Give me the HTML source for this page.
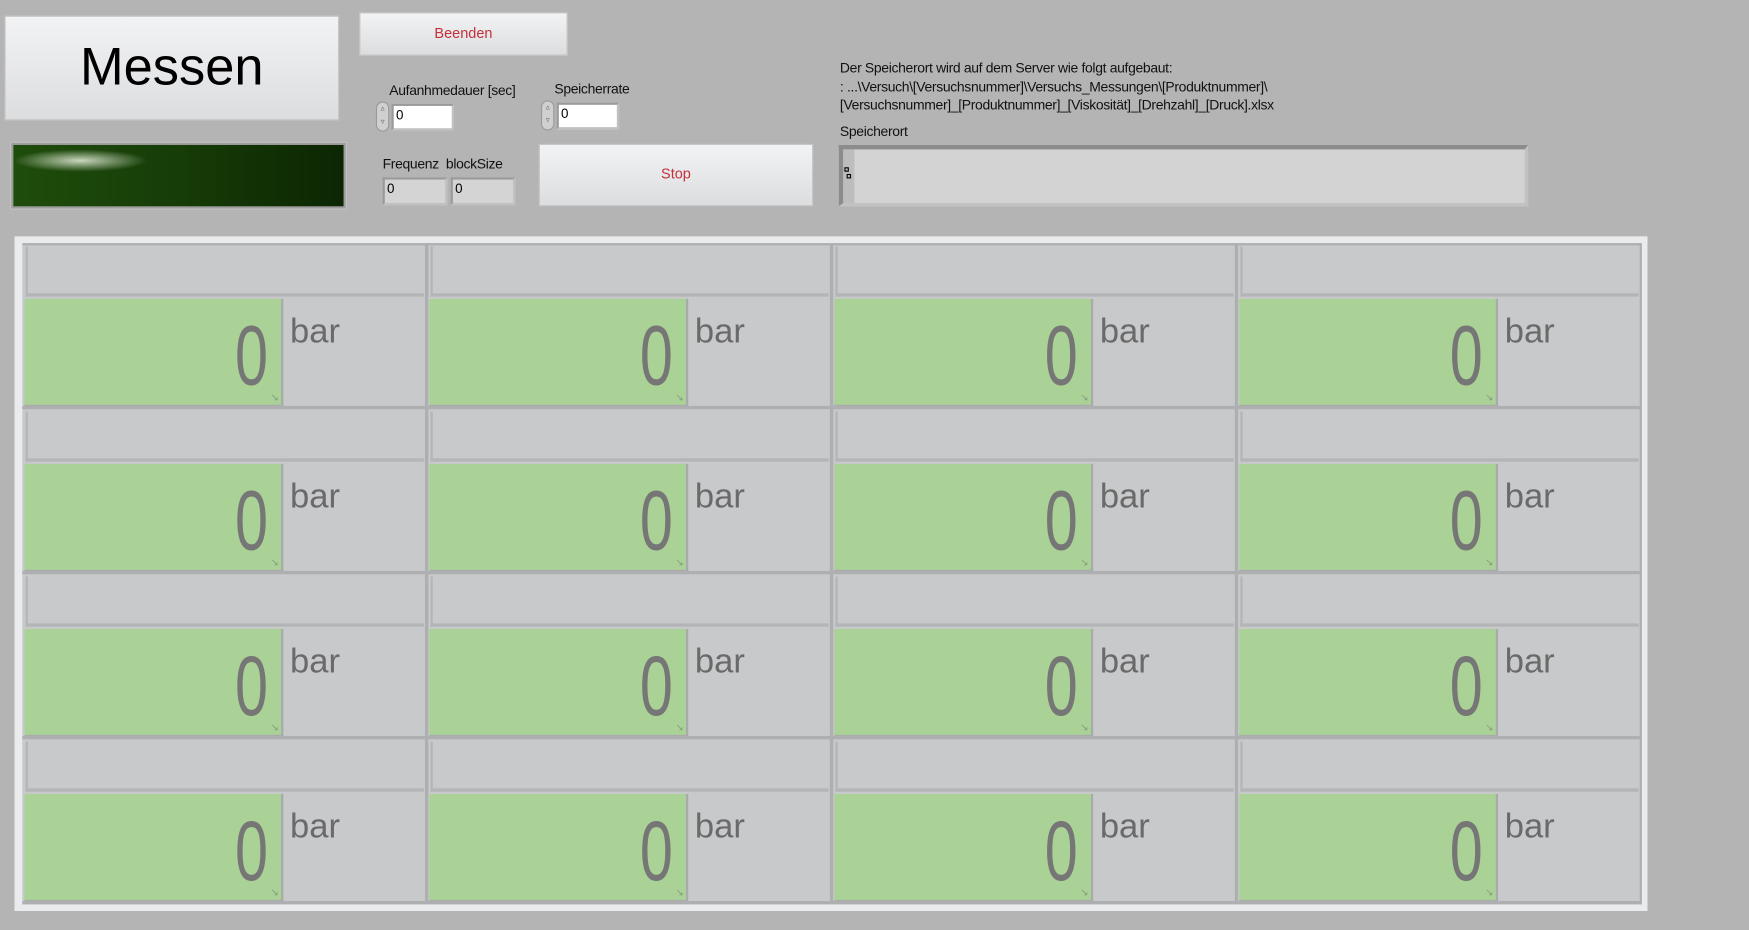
<!DOCTYPE html>
<html><head><meta charset="utf-8"><style>
html,body{margin:0;padding:0;background:#b4b4b4;overflow:hidden;width:1749px;height:930px}
#s{position:absolute;left:0;top:0;width:1568px;height:834px;transform:scale(1.11543,1.11511);transform-origin:0 0;font-family:"Liberation Sans",sans-serif}
.a{position:absolute;box-sizing:border-box}
.btn{background:linear-gradient(#f2f3f4,#dcdddf);border:1px solid #c8c8c8;text-align:center}
.lbl{position:absolute;font-size:12.5px;color:#111;white-space:nowrap;letter-spacing:-0.3px}
.in{position:absolute;box-sizing:border-box;background:#fff;border:2px solid #c0c0c0;border-top-color:#9a9a9a;border-left-color:#9a9a9a;font-size:12px;padding-left:2px;line-height:17px}
.cell{position:absolute;width:363px;height:148px}
.hd{position:absolute;left:2px;top:2px;width:357px;height:45px;border-left:2px solid #b4b5b7;border-bottom:3px solid #b4b5b7;box-sizing:border-box}
.gr{position:absolute;left:1px;top:49px;width:230px;height:95px;background:#aad296;border-right:2px solid #a9aaac;border-bottom:2px solid #a9aaac}
.z{position:absolute;right:12px;top:14px;font-size:76px;color:#767676;transform:scaleX(.7);transform-origin:right top;line-height:76px}
.ar{position:absolute;right:2px;bottom:1px;font-size:9px;color:#8a9a80}
.bar{position:absolute;left:239px;top:60px;font-size:31px;color:#6a6a6a}
</style></head><body><div id="s">
<div class="a btn" style="left:4px;top:14px;width:300px;height:94px;font-size:47px;line-height:90px;color:#000">Messen</div>
<div class="a" style="left:9px;top:127px;width:302px;height:61px;background:#9e9e9e;border:1px solid #c4c4c4"></div>
<div class="a" style="left:12px;top:130px;width:296px;height:55px;background:radial-gradient(ellipse 60px 10px at 60px 14px,rgba(220,230,210,.9),rgba(200,220,190,0) 100%),linear-gradient(90deg,#1f4d0c,#163c07 50%,#0c2603)"></div>
<div class="a btn" style="left:322px;top:11px;width:187px;height:39px;font-size:13px;line-height:36px;color:#c4303a">Beenden</div>
<div class="lbl" style="left:349px;top:74px">Aufanhmedauer [sec]</div>
<div class="a" style="left:337px;top:91px;width:12px;height:27px;background:#d0d0d0;border-radius:6px;border:1px solid #999;font-size:7px;color:#666;line-height:12px;text-align:center">▵<br>▿</div>
<div class="in" style="left:351px;top:93px;width:56px;height:24px">0</div>
<div class="lbl" style="left:497px;top:73px">Speicherrate</div>
<div class="a" style="left:485px;top:90px;width:12px;height:27px;background:#d0d0d0;border-radius:6px;border:1px solid #999;font-size:7px;color:#666;line-height:12px;text-align:center">▵<br>▿</div>
<div class="in" style="left:499px;top:92px;width:56px;height:24px">0</div>
<div class="lbl" style="left:343px;top:140px">Frequenz&nbsp; blockSize</div>
<div class="in" style="left:343px;top:159px;width:58px;height:25px;background:#d4d4d4">0</div>
<div class="in" style="left:404px;top:159px;width:58px;height:25px;background:#d4d4d4">0</div>
<div class="a btn" style="left:483px;top:129px;width:246px;height:56px;font-size:13px;line-height:52px;color:#c4303a">Stop</div>
<div class="lbl" style="left:753px;top:53px;line-height:16.6px">Der Speicherort wird auf dem Server wie folgt aufgebaut:<br>: ...\Versuch\[Versuchsnummer]\Versuchs_Messungen\[Produktnummer]\<br>[Versuchsnummer]_[Produktnummer]_[Viskosität]_[Drehzahl]_[Druck].xlsx</div>
<div class="lbl" style="left:753px;top:111px">Speicherort</div>
<div class="a" style="left:752px;top:130px;width:618px;height:55px;background:#d3d3d3;border:4px solid #8c8c8c;border-right:3px solid #c2c2c2;border-bottom:3px solid #c2c2c2"></div>
<div class="a" style="left:756px;top:134px;width:10px;height:48px;background:#bdbdbd"></div>
<div class="a" style="left:757px;top:150px;width:4px;height:4px;border:1px solid #000"></div>
<div class="a" style="left:759px;top:156px;width:4px;height:4px;border:1px solid #000"></div>
<div class="a" style="left:13px;top:212px;width:1464px;height:605px;background:#c8c9cb;border:7px solid #e9ebed;border-right-width:6px;border-bottom-width:6px"></div>
<div class="cell" style="left:21px;top:219px"><div class="hd"></div><div class="gr"><div class="z">0</div><div class="ar">↘</div></div><div class="bar">bar</div></div>
<div class="cell" style="left:384px;top:219px"><div class="hd"></div><div class="gr"><div class="z">0</div><div class="ar">↘</div></div><div class="bar">bar</div></div>
<div class="cell" style="left:747px;top:219px"><div class="hd"></div><div class="gr"><div class="z">0</div><div class="ar">↘</div></div><div class="bar">bar</div></div>
<div class="cell" style="left:1110px;top:219px"><div class="hd"></div><div class="gr"><div class="z">0</div><div class="ar">↘</div></div><div class="bar">bar</div></div>
<div class="cell" style="left:21px;top:367px"><div class="hd"></div><div class="gr"><div class="z">0</div><div class="ar">↘</div></div><div class="bar">bar</div></div>
<div class="cell" style="left:384px;top:367px"><div class="hd"></div><div class="gr"><div class="z">0</div><div class="ar">↘</div></div><div class="bar">bar</div></div>
<div class="cell" style="left:747px;top:367px"><div class="hd"></div><div class="gr"><div class="z">0</div><div class="ar">↘</div></div><div class="bar">bar</div></div>
<div class="cell" style="left:1110px;top:367px"><div class="hd"></div><div class="gr"><div class="z">0</div><div class="ar">↘</div></div><div class="bar">bar</div></div>
<div class="cell" style="left:21px;top:515px"><div class="hd"></div><div class="gr"><div class="z">0</div><div class="ar">↘</div></div><div class="bar">bar</div></div>
<div class="cell" style="left:384px;top:515px"><div class="hd"></div><div class="gr"><div class="z">0</div><div class="ar">↘</div></div><div class="bar">bar</div></div>
<div class="cell" style="left:747px;top:515px"><div class="hd"></div><div class="gr"><div class="z">0</div><div class="ar">↘</div></div><div class="bar">bar</div></div>
<div class="cell" style="left:1110px;top:515px"><div class="hd"></div><div class="gr"><div class="z">0</div><div class="ar">↘</div></div><div class="bar">bar</div></div>
<div class="cell" style="left:21px;top:663px"><div class="hd"></div><div class="gr"><div class="z">0</div><div class="ar">↘</div></div><div class="bar">bar</div></div>
<div class="cell" style="left:384px;top:663px"><div class="hd"></div><div class="gr"><div class="z">0</div><div class="ar">↘</div></div><div class="bar">bar</div></div>
<div class="cell" style="left:747px;top:663px"><div class="hd"></div><div class="gr"><div class="z">0</div><div class="ar">↘</div></div><div class="bar">bar</div></div>
<div class="cell" style="left:1110px;top:663px"><div class="hd"></div><div class="gr"><div class="z">0</div><div class="ar">↘</div></div><div class="bar">bar</div></div>
<div class="a" style="left:381px;top:219px;width:3px;height:592px;background:#aeafb1"></div>
<div class="a" style="left:744px;top:219px;width:3px;height:592px;background:#aeafb1"></div>
<div class="a" style="left:1107px;top:219px;width:3px;height:592px;background:#aeafb1"></div>
<div class="a" style="left:1470px;top:219px;width:2px;height:592px;background:#aeafb1"></div>
<div class="a" style="left:20px;top:364px;width:1452px;height:3px;background:#aeafb1"></div>
<div class="a" style="left:20px;top:512px;width:1452px;height:3px;background:#aeafb1"></div>
<div class="a" style="left:20px;top:660px;width:1452px;height:3px;background:#aeafb1"></div>
<div class="a" style="left:20px;top:808px;width:1452px;height:3px;background:#aeafb1"></div>
<div class="a" style="left:20px;top:218px;width:1452px;height:2px;background:#aeafb1"></div>
</div></body></html>
